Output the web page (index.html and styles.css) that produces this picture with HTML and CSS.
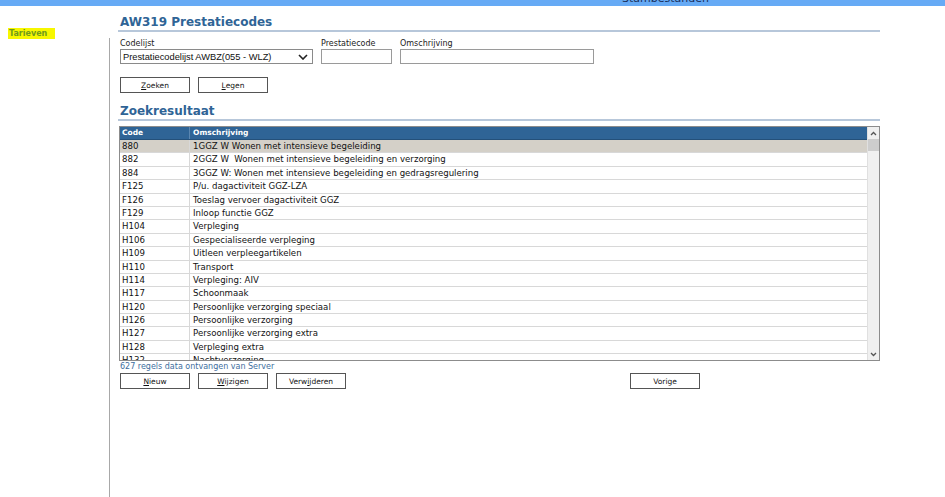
FILE: index.html
```html
<!DOCTYPE html>
<html lang="nl">
<head>
    <meta charset="UTF-8">
    <title>AW319 Prestatiecodes</title>
    <link rel="stylesheet" href="styles.css">
</head>
<body>
    <div class="topbar"><span class="topbar-title">Stambestanden</span></div>

    <div class="page">
        <div class="sidebar">
            <div class="sidebar-head"><span class="menu-item">Tarieven</span></div>
            <div class="sidebar-rule"></div>
        </div>

        <div class="main">
            <h1 class="section-title">AW319 Prestatiecodes</h1>

            <div class="filters">
                <div class="field">
                    <label>Codelijst</label>
                    <div class="select">
                        <span>Prestatiecodelijst AWBZ(055 - WLZ)</span>
                        <svg width="10" height="6" viewBox="0 0 10 6"><path d="M1 1 L5 5 L9 1" fill="none" stroke="#222" stroke-width="1.6"/></svg>
                    </div>
                </div>
                <div class="field">
                    <label>Prestatiecode</label>
                    <div class="input input-code"></div>
                </div>
                <div class="field">
                    <label>Omschrijving</label>
                    <div class="input input-desc"></div>
                </div>
            </div>

            <div class="buttons buttons-top">
                <button class="btn"><u>Z</u>oeken</button>
                <button class="btn"><u>L</u>egen</button>
            </div>

            <h2 class="section-title">Zoekresultaat</h2>

            <div class="grid">
                <div class="grid-body">
                    <div class="row head">
                        <div class="c-code">Code</div>
                        <div class="c-desc">Omschrijving</div>
                    </div>
                    <div class="row selected"><div class="c-code">880</div><div class="c-desc">1GGZ W Wonen met intensieve begeleiding</div></div>
                    <div class="row"><div class="c-code">882</div><div class="c-desc">2GGZ W&nbsp; Wonen met intensieve begeleiding en verzorging</div></div>
                    <div class="row"><div class="c-code">884</div><div class="c-desc">3GGZ W: Wonen met intensieve begeleiding en gedragsregulering</div></div>
                    <div class="row"><div class="c-code">F125</div><div class="c-desc">P/u. dagactiviteit GGZ-LZA</div></div>
                    <div class="row"><div class="c-code">F126</div><div class="c-desc">Toeslag vervoer dagactiviteit GGZ</div></div>
                    <div class="row"><div class="c-code">F129</div><div class="c-desc">Inloop functie GGZ</div></div>
                    <div class="row"><div class="c-code">H104</div><div class="c-desc">Verpleging</div></div>
                    <div class="row"><div class="c-code">H106</div><div class="c-desc">Gespecialiseerde verpleging</div></div>
                    <div class="row"><div class="c-code">H109</div><div class="c-desc">Uitleen verpleegartikelen</div></div>
                    <div class="row"><div class="c-code">H110</div><div class="c-desc">Transport</div></div>
                    <div class="row"><div class="c-code">H114</div><div class="c-desc">Verpleging: AIV</div></div>
                    <div class="row"><div class="c-code">H117</div><div class="c-desc">Schoonmaak</div></div>
                    <div class="row"><div class="c-code">H120</div><div class="c-desc">Persoonlijke verzorging speciaal</div></div>
                    <div class="row"><div class="c-code">H126</div><div class="c-desc">Persoonlijke verzorging</div></div>
                    <div class="row"><div class="c-code">H127</div><div class="c-desc">Persoonlijke verzorging extra</div></div>
                    <div class="row"><div class="c-code">H128</div><div class="c-desc">Verpleging extra</div></div>
                    <div class="row"><div class="c-code">H132</div><div class="c-desc">Nachtverzorging</div></div>
                </div>
                <div class="scrollbar">
                    <div class="arrow"><svg width="7" height="5" viewBox="0 0 7 5"><path d="M1 4 L3.5 1.5 L6 4" fill="none" stroke="#555" stroke-width="1.3"/></svg></div>
                    <div class="thumb"></div>
                    <div class="track"></div>
                    <div class="arrow"><svg width="7" height="5" viewBox="0 0 7 5"><path d="M1 1 L3.5 3.5 L6 1" fill="none" stroke="#555" stroke-width="1.3"/></svg></div>
                </div>
            </div>

            <div class="status">627 regels data ontvangen van Server</div>

            <div class="buttons buttons-bottom">
                <button class="btn"><u>N</u>ieuw</button>
                <button class="btn"><u>W</u>ijzigen</button>
                <button class="btn">Verw<u>i</u>jderen</button>
                <button class="btn btn-prev">Vorige</button>
            </div>
        </div>
    </div>
</body>
</html>
```

FILE: styles.css
```css
body {
    margin: 0;
    font-family: "DejaVu Sans", Verdana, sans-serif;
    font-size: 8px;
    color: #111;
    background: white;
    height: 497px;
    overflow: hidden;
}

/* Top bar */
.topbar {
    height: 6px;
    background: #66aaf5;
    overflow: hidden;
    position: relative;
}

.topbar-title {
    position: absolute;
    left: 622px;
    top: -8px;
    font-size: 11px;
    color: #1a2f5a;
}

.page {
    display: flex;
    height: 491px;
}

/* Sidebar */
.sidebar {
    width: 110px;
    display: flex;
    flex-direction: column;
}

.sidebar-head {
    height: 32px;
    padding-left: 8px;
    padding-top: 22px;
    box-sizing: border-box;
}

.menu-item {
    display: inline-block;
    background: #f7f700;
    color: #6f9a1c;
    font-weight: bold;
    font-size: 8px;
    line-height: 11px;
    padding: 0 8px 0 1px;
}

.sidebar-rule {
    flex: 1;
    border-right: 1px solid #a8a8a8;
}

/* Main */
.main {
    padding-left: 8px;
    width: 762px;
}

.section-title {
    margin: 0;
    padding-left: 2px;
    font-size: 12px;
    font-weight: bold;
    color: #2f6496;
    border-bottom: 2px solid #b7c7da;
    line-height: 16px;
}

h1.section-title {
    padding-top: 8px;
}

h2.section-title {
    margin-top: 10px;
}

.filters {
    display: flex;
    gap: 8px;
    padding-left: 2px;
    margin-top: 7px;
}

.field {
    display: flex;
    flex-direction: column;
}

.field label {
    font-size: 8px;
    line-height: 10px;
    color: #222;
}

.select {
    width: 193px;
    height: 15px;
    box-sizing: border-box;
    border: 1px solid #8a8a8a;
    display: flex;
    align-items: center;
    justify-content: space-between;
    padding: 0 4px 0 2px;
    font-family: "Liberation Sans", Arial, sans-serif;
    font-size: 9.3px;
}

.input {
    height: 15px;
    box-sizing: border-box;
    border: 1px solid #9a9a9a;
}

.input-code {
    width: 71px;
}

.input-desc {
    width: 194px;
}

.buttons {
    display: flex;
    gap: 8px;
    padding-left: 2px;
}

.buttons-top {
    margin-top: 13px;
}

.btn {
    width: 70px;
    height: 16px;
    padding: 0;
    background: white;
    border: 1px solid #555;
    font-family: "DejaVu Sans", Verdana, sans-serif;
    font-size: 7.5px;
    color: #111;
}

.btn-prev {
    margin-left: 276px;
}

/* Result grid */
.grid {
    display: flex;
    margin-top: 5px;
    margin-left: 1px;
    width: 761px;
    height: 235px;
    box-sizing: border-box;
    border: 1px solid #8c8c8c;
    overflow: hidden;
}

.grid-body {
    flex: 1;
    overflow: hidden;
}

.row {
    display: flex;
    height: 13.4px;
    box-sizing: border-box;
    border-bottom: 1px solid #d8d8d8;
    line-height: 12.4px;
    font-size: 8.6px;
    white-space: nowrap;
}

.row.head {
    height: 13px;
    background: #2f6496;
    color: white;
    font-weight: bold;
    font-size: 7.5px;
    border-bottom: 1px solid #24507a;
}

.row.selected {
    background: #d4d0c8;
}

.c-code {
    width: 70px;
    padding-left: 2px;
    box-sizing: border-box;
    border-right: 1px solid #d8d8d8;
}

.head .c-code {
    border-right-color: #5b86b0;
}

.c-desc {
    flex: 1;
    padding-left: 3px;
}

.scrollbar {
    width: 11px;
    background: #f0f0f0;
    border-left: 1px solid #e0e0e0;
    display: flex;
    flex-direction: column;
}

.arrow {
    height: 12px;
    display: flex;
    align-items: center;
    justify-content: center;
}

.thumb {
    height: 12px;
    background: #cdcdcd;
}

.track {
    flex: 1;
}

.status {
    padding-left: 2px;
    font-size: 8px;
    line-height: 12px;
    color: #3e6e9e;
}

.buttons-bottom {
    margin-top: 0;
}
```
